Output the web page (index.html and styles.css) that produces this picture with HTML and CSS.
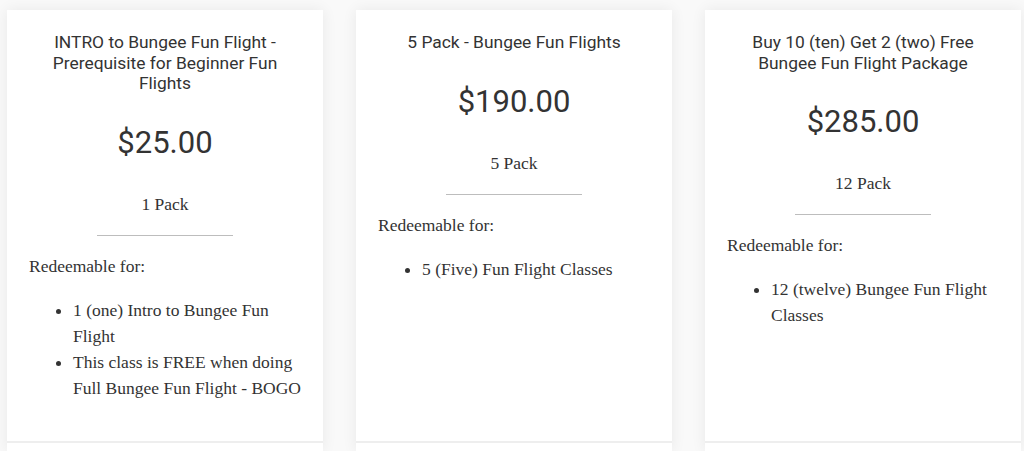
FILE: index.html
```html
<!DOCTYPE html>
<html>
<head>
<meta charset="utf-8">
<link rel="stylesheet" href="styles.css">
</head>
<body>
<div class="plans">
  <div class="card">
    <div class="card-body">
      <h3 class="title">INTRO to Bungee Fun Flight - Prerequisite for Beginner Fun Flights</h3>
      <div class="price">$25.00</div>
      <div class="pack">1 Pack</div>
      <hr class="rule">
      <p class="lead">Redeemable for:</p>
      <ul class="items">
        <li>1 (one) Intro to Bungee Fun Flight</li>
        <li>This class is FREE when doing Full Bungee Fun Flight - BOGO</li>
      </ul>
    </div>
    <div class="card-foot"></div>
  </div>
  <div class="card">
    <div class="card-body">
      <h3 class="title">5 Pack - Bungee Fun Flights</h3>
      <div class="price">$190.00</div>
      <div class="pack">5 Pack</div>
      <hr class="rule">
      <p class="lead">Redeemable for:</p>
      <ul class="items">
        <li>5 (Five) Fun Flight Classes</li>
      </ul>
    </div>
    <div class="card-foot"></div>
  </div>
  <div class="card">
    <div class="card-body">
      <h3 class="title">Buy 10 (ten) Get 2 (two) Free Bungee Fun Flight Package</h3>
      <div class="price">$285.00</div>
      <div class="pack">12 Pack</div>
      <hr class="rule">
      <p class="lead">Redeemable for:</p>
      <ul class="items">
        <li>12 (twelve) Bungee Fun Flight Classes</li>
      </ul>
    </div>
    <div class="card-foot"></div>
  </div>
</div>
</body>
</html>
```

FILE: styles.css
```css
html, body {
  margin: 0;
  padding: 0;
  background: #f9f9f9;
  overflow: hidden;
}

.plans {
  display: flex;
  gap: 33px;
  padding: 10px 0 0 7px;
}

.card {
  width: 316px;
  flex: 0 0 316px;
  background: #fff;
  box-shadow: 0 0 14px rgba(0, 0, 0, 0.07);
  display: flex;
  flex-direction: column;
}

.card-body {
  height: 431px;
  box-sizing: border-box;
  padding: 22px 22px 0;
  color: #333;
  overflow: hidden;
}

.card-foot {
  height: 8px;
  border-top: 2px solid #eeeeee;
}

.title {
  margin: 0;
  font-family: Roboto, "Liberation Sans", sans-serif;
  font-weight: 400;
  font-size: 17.4px;
  line-height: 20.5px;
  text-align: center;
  color: #333;
}

.price {
  margin-top: 31px;
  font-family: Roboto, "Liberation Sans", sans-serif;
  font-size: 31px;
  line-height: 36px;
  text-align: center;
  color: #333;
}

.pack {
  margin-top: 31px;
  font-family: "Liberation Serif", serif;
  font-size: 17.5px;
  line-height: 24px;
  text-align: center;
}

.rule {
  width: 136px;
  margin: 19px auto 0;
  border: 0;
  border-top: 1px solid #bdbdbd;
  height: 0;
}

.lead {
  margin: 18px 0 0;
  font-family: "Liberation Serif", serif;
  font-size: 17.5px;
  line-height: 24px;
}

.items {
  margin: 19px 0 0;
  padding-left: 44px;
  font-family: "Liberation Serif", serif;
  font-size: 17.5px;
  line-height: 26px;
}
```
